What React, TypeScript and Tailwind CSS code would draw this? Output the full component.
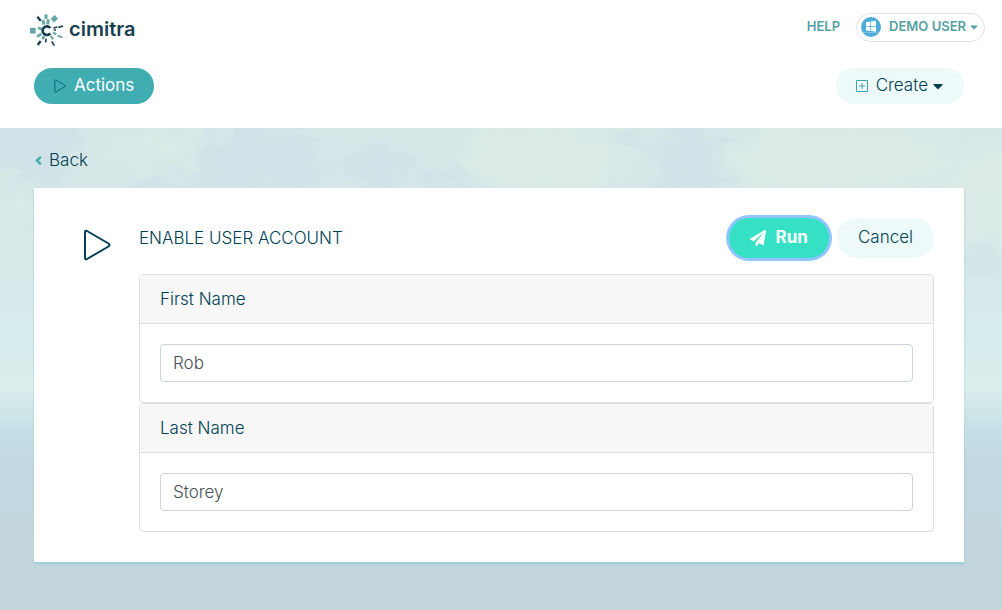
import { useState } from 'react';
import { FaCaretDown, FaChevronLeft, FaPaperPlane } from 'react-icons/fa';

interface FieldProps {
  id: string;
  label: string;
  initial: string;
}

function Logo() {
  return (
    <a href="#home" className="flex items-center gap-px text-[#173f4f]">
      <svg className="h-[38px] w-10" viewBox="0 0 120 114" fill="none" aria-hidden="true">
        {/* Light rays */}
        <g stroke="#67a5a7">
          <path strokeWidth="9" d="M54 13V27" />
          <path strokeWidth="9" d="M44 30L48 44M61 28L59 43" />
          <path strokeWidth="15" d="M73 32L85 20" />
          <path strokeWidth="17" d="M6 62H23" />
          <path strokeWidth="8" d="M30 53L41 57M27 80L40 72M44 88L48 78" />
          <path strokeWidth="6" d="M75 67L85 73M89 77L103 82M68 78L75 88" />
        </g>
        {/* Dark rays */}
        <g stroke="#173f4f">
          <path strokeWidth="7" d="M28 20L38 32M29 105L38 93" />
          <path strokeWidth="5" d="M76 54L88 51M91 52L105 48M54 86L53 97M71 94L79 107M77 60H84" />
        </g>
        <path d="M67 54A13 13 0 1 0 67 70" stroke="#173f4f" strokeWidth="8" />
      </svg>
      <span className="text-xl leading-6 font-semibold">cimitra</span>
    </a>
  );
}

function PlayIcon({ className }: { className: string }) {
  return (
    <svg className={className} viewBox="0 0 28 32" fill="none" stroke="currentColor" strokeWidth="2" strokeLinejoin="round" aria-hidden="true">
      <path d="M2 3.2Q2 1 4 2L25.500 14.500Q27.500 16 25.500 17.500L4 30Q2 31 2 28.800Z" />
    </svg>
  );
}

function Avatar() {
  return (
    <svg className="size-5" viewBox="0 0 20 20" aria-hidden="true">
      <circle cx="10" cy="10" r="10" fill="#4facd6" />
      <path fill="#fff" d="M5 5.300 9.300 4.600V9H5zM10 4.500 15 3.700V9H10zM5 9.700H9.300V14L5 13.400zM10 9.700H15V14.800L10 14.100z" />
      <path stroke="#9fd3ea" strokeWidth=".6" d="M2 15.500H18" />
    </svg>
  );
}

// Pale sky with faint clouds behind the page content
function Sky() {
  return (
    <svg className="absolute inset-0 -z-10 size-full" viewBox="0 0 1002 482" preserveAspectRatio="none" aria-hidden="true">
      <defs>
        <linearGradient id="sky" x2="0" y2="1">
          <stop offset="0" stopColor="#d7e7e7" />
          <stop offset=".3" stopColor="#d7e8e8" />
          <stop offset=".42" stopColor="#d5ebec" />
          <stop offset=".54" stopColor="#daeeeb" />
          <stop offset=".63" stopColor="#c3dfe6" />
          <stop offset=".7" stopColor="#c2d7e1" />
          <stop offset="1" stopColor="#c3d5da" />
        </linearGradient>
        <filter id="cloud" x="-30%" y="-30%" width="160%" height="160%">
          <feGaussianBlur in="SourceGraphic" stdDeviation="7" result="soft" />
          <feTurbulence type="fractalNoise" baseFrequency=".03 .05" numOctaves="5" seed="4" result="noise" />
          <feDisplacementMap in="soft" in2="noise" scale="60" xChannelSelector="R" yChannelSelector="G" />
          <feGaussianBlur stdDeviation="1" />
        </filter>
      </defs>
      <rect width="1002" height="482" fill="url(#sky)" />
      <g filter="url(#cloud)">
        <g fill="#cbe0e8" opacity=".6">
          <ellipse cx="15" cy="15" rx="60" ry="40" />
          <ellipse cx="265" cy="30" rx="65" ry="38" />
          <ellipse cx="375" cy="40" rx="40" ry="22" />
          <ellipse cx="190" cy="60" rx="70" ry="12" />
          <ellipse cx="450" cy="57" rx="28" ry="12" />
          <ellipse cx="690" cy="35" rx="32" ry="40" />
          <ellipse cx="645" cy="12" rx="18" ry="10" />
          <ellipse cx="985" cy="135" rx="28" ry="10" />
        </g>
        <g fill="#dcebe6" opacity=".6">
          <ellipse cx="160" cy="22" rx="45" ry="14" />
          <ellipse cx="545" cy="30" rx="90" ry="40" />
          <ellipse cx="840" cy="30" rx="110" ry="50" />
          <ellipse cx="10" cy="85" rx="50" ry="12" />
          <ellipse cx="990" cy="70" rx="50" ry="55" />
        </g>
      </g>
    </svg>
  );
}

function Field({ id, label, initial }: FieldProps) {
  const [value, setValue] = useState(initial);

  return (
    <div className="rounded border border-[#dfdfdf]">
      <div className="border-b border-[#dfdfdf] bg-[#f7f7f7] px-5 py-3">
        <label htmlFor={id} className="block leading-6">{label}</label>
      </div>
      <div className="p-5">
        <input
          id={id}
          type="text"
          value={value}
          onChange={(e) => setValue(e.target.value)}
          className="block h-[38px] w-full rounded border border-[#ced4da] bg-white px-3 text-[#495057]"
        />
      </div>
    </div>
  );
}

export default function App() {
  return (
    <div className="flex min-h-screen flex-col bg-white font-['Inter',sans-serif] text-[17px] font-light text-[#003f54]">
      <header className="pb-6">
        <div className="flex h-14 items-center justify-between pt-0.5 pr-[17px] pl-7">
          <Logo />
          <nav className="flex items-center gap-4 pb-1 text-[13px] font-semibold text-[#559fa3]">
            <a href="#help">HELP</a>
            <button type="button" className="flex h-[29px] items-center rounded-full border border-[#dee2e6] px-1">
              <Avatar />
              <span className="mr-0.5 ml-2">DEMO USER</span>
              <FaCaretDown className="size-3" />
            </button>
          </nav>
        </div>
        <div className="flex items-center justify-between pt-3 pr-[38px] pl-[34px]">
          <button type="button" className="flex h-9 items-center gap-2 rounded-full bg-[#40adb3] px-5 font-normal text-white">
            <PlayIcon className="h-4 w-3 text-[#075a70]" />
            Actions
          </button>
          <button type="button" className="flex h-9 items-center rounded-full bg-[#eef9fa] pr-[18px] pl-5">
            <svg className="mr-2 size-3" viewBox="0 0 12 12" fill="none" stroke="#40a5ad" aria-hidden="true">
              <path d="M.5.5h11v11H.5zM6 3v6M3 6h6" />
            </svg>
            Create
            <FaCaretDown className="ml-0.5 size-4" />
          </button>
        </div>
      </header>

      <main className="relative isolate flex-1 pt-5 pr-[38px] pb-12 pl-[34px]">
        <Sky />
        <a href="#back" className="flex w-fit items-center gap-1.5 leading-6">
          <FaChevronLeft className="size-[9px] stroke-[#40adb3] stroke-[60] text-[#40adb3]" />
          Back
        </a>
        <section className="mt-4 bg-white p-[30px] shadow-[0_2px_2px_#9dced4]">
          <div className="flex">
            <PlayIcon className="mt-[11px] mr-7 ml-[19px] h-8 w-7 shrink-0" />
            <div className="min-w-0 flex-1">
              <div className="flex items-center justify-between pb-4">
                <h1 className="pt-0.5">ENABLE USER ACCOUNT</h1>
                <div className="flex gap-2">
                  <button type="button" className="flex h-10 items-center gap-2.5 rounded-full bg-[#36e0c5] px-[21px] text-[17px] font-bold text-white ring-3 ring-[#91c5ff]">
                    <FaPaperPlane className="size-4" />
                    Run
                  </button>
                  <button type="button" className="h-10 rounded-full bg-[#eef9fa] px-[21px]">Cancel</button>
                </div>
              </div>
              <Field id="first-name" label="First Name" initial="Rob" />
              <Field id="last-name" label="Last Name" initial="Storey" />
            </div>
          </div>
        </section>
      </main>
    </div>
  );
}
